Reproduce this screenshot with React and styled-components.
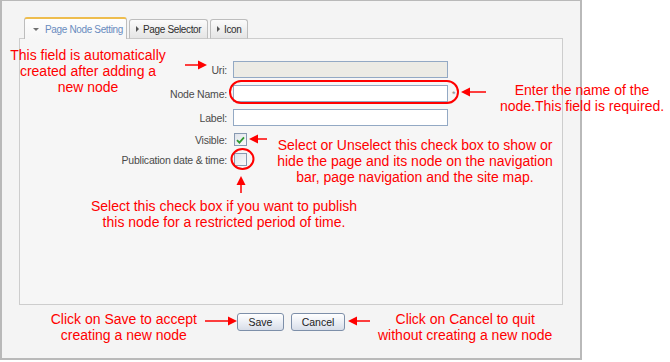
import React from "react";
import styled, { createGlobalStyle } from "styled-components";

const GlobalStyle = createGlobalStyle`
  html, body {
    margin: 0;
    padding: 0;
    background: #ffffff;
  }
  body {
    font-family: "Liberation Sans", Arial, sans-serif;
  }
`;

const Shell = styled.div`
  position: relative;
  width: 670px;
  height: 362px;
  overflow: hidden;
`;

const Panel = styled.div`
  box-sizing: border-box;
  width: 582px;
  height: 360px;
  padding: 16px 17px 0 17px;
  background: #f4f4f4;
  border: 2px solid #b9b9b9;
  border-top-width: 1px;
  display: flex;
  flex-direction: column;
`;

const TabBar = styled.ul`
  list-style: none;
  margin: 0 0 -1px 5px;
  padding: 0;
  display: flex;
  align-items: flex-end;
  gap: 2px;
  position: relative;
  z-index: 1;
`;

const Tab = styled.li`
  box-sizing: border-box;
  width: ${({ $width }) => $width}px;
  height: ${({ $active }) => ($active ? 22 : 20)}px;
  display: flex;
  align-items: center;
  gap: 4px;
  padding: ${({ $active }) => ($active ? "1px 0 0 8px" : "0 0 0 6px")};
  font-size: 10px;
  letter-spacing: -0.35px;
  color: ${({ $active }) => ($active ? "#6a8cbf" : "#2e2e2e")};
  border: 1px solid #bdbdbd;
  border-bottom: ${({ $active }) => ($active ? "none" : "1px solid #c9c9c9")};
  border-top: ${({ $active }) => ($active ? "2px solid #eebd4e" : "1px solid #bdbdbd")};
  border-radius: 3px 3px 0 0;
  background: ${({ $active }) =>
    $active ? "linear-gradient(#fdfdfd, #f6f6f6)" : "linear-gradient(#fbfbfb, #e5e5e5)"};
`;

const Caret = styled.span`
  width: 0;
  height: 0;
  ${({ $open }) =>
    $open
      ? `border-left: 3px solid transparent;
         border-right: 3px solid transparent;
         border-top: 3px solid #707070;
         margin-right: 2px;`
      : `border-top: 3px solid transparent;
         border-bottom: 3px solid transparent;
         border-left: 3px solid #555;`}
`;

const ContentBox = styled.div`
  box-sizing: border-box;
  height: 267px;
  background: #f6f6f6;
  border: 1px solid #cdcdcd;
  padding-top: 22px;
`;

const Form = styled.div`
  display: grid;
  grid-template-columns: 207px 215px auto;
  column-gap: 6px;
  row-gap: 7px;
  align-items: center;
`;

const Label = styled.label`
  text-align: right;
  font-size: 10.5px;
  letter-spacing: -0.2px;
  color: #4a4a4a;
  white-space: nowrap;
`;

const TextInput = styled.div`
  box-sizing: border-box;
  height: 17px;
  border: 1px solid #93a9c4;
  background: ${({ $disabled }) => ($disabled ? "#ecebe5" : "#ffffff")};
`;

const Required = styled.span`
  font-size: 9px;
  color: #888;
  margin-left: -2px;
`;

const CheckBox = styled.span`
  box-sizing: border-box;
  width: 13px;
  height: 13px;
  margin-left: 1px;
  border: 1px solid #8799b1;
  background: linear-gradient(135deg, #dfe3ea, #fbfbfb);
  display: flex;
  align-items: center;
  justify-content: center;
`;

const ButtonRow = styled.div`
  display: grid;
  grid-template-columns: 1fr auto 1fr;
  align-items: start;
  margin-top: 6px;
`;

const Side = styled.div`
  display: flex;
  align-items: flex-start;
  justify-content: ${({ $end }) => ($end ? "flex-end" : "flex-start")};
  gap: ${({ $gap }) => $gap}px;
`;

const Buttons = styled.div`
  display: flex;
  gap: 7px;
  padding-top: 2px;
`;

const Button = styled.button`
  box-sizing: border-box;
  width: ${({ $width }) => $width}px;
  height: 18px;
  padding: 0;
  font-family: "Liberation Sans", Arial, sans-serif;
  font-size: 10.5px;
  color: #222;
  border: 1px solid #7d8fa9;
  border-radius: 3px;
  background: linear-gradient(#ffffff, #e8ecf3 60%, #d7dde8);
`;

const Note = styled.div`
  font-size: 14px;
  line-height: 16px;
  color: #ff0000;
  text-align: center;
  white-space: nowrap;
`;

const Callout = styled(Note)`
  position: absolute;
  left: ${({ $x }) => $x}px;
  top: ${({ $y }) => $y}px;
  transform: translateX(-50%);
`;

const Overlay = styled.svg`
  position: absolute;
  left: 0;
  top: 0;
  pointer-events: none;
`;

const ArrowSvg = styled.svg`
  flex: none;
  margin-top: 2px;
`;

function FlowArrow({ length, left }) {
  return (
    <ArrowSvg width={length} height="18" viewBox={`0 0 ${length} 18`}>
      {left ? (
        <>
          <line x1="6" y1="8" x2={length} y2="8" stroke="#ff0000" strokeWidth="1.5" />
          <polygon points={`0,8 9,3.5 9,12.5`} fill="#ff0000" />
        </>
      ) : (
        <>
          <line x1="0" y1="8" x2={length - 6} y2="8" stroke="#ff0000" strokeWidth="1.5" />
          <polygon points={`${length},8 ${length - 9},3.5 ${length - 9},12.5`} fill="#ff0000" />
        </>
      )}
    </ArrowSvg>
  );
}

function Check() {
  return (
    <svg width="9" height="8" viewBox="0 0 9 8">
      <path d="M1 4.2 L3.4 6.6 L8 1.4" fill="none" stroke="#2f9a2f" strokeWidth="1.8" />
    </svg>
  );
}

const tabs = [
  { label: "Page Node Setting", width: 103, active: true },
  { label: "Page Selector", width: 79 },
  { label: "Icon", width: 38 },
];

export default function App() {
  return (
    <Shell>
      <GlobalStyle />
      <Panel>
        <TabBar>
          {tabs.map((t) => (
            <Tab key={t.label} $width={t.width} $active={t.active}>
              <Caret $open={t.active} />
              {t.label}
            </Tab>
          ))}
        </TabBar>
        <ContentBox>
          <Form>
            <Label>Uri:</Label>
            <TextInput $disabled />
            <span />
            <Label>Node Name:</Label>
            <TextInput />
            <Required>*</Required>
            <Label>Label:</Label>
            <TextInput />
            <span />
            <Label>Visible:</Label>
            <CheckBox>
              <Check />
            </CheckBox>
            <span />
            <Label>Publication date &amp; time:</Label>
            <CheckBox />
            <span />
          </Form>
        </ContentBox>
        <ButtonRow>
          <Side $end $gap={8}>
            <Note>
              Click on Save to accept
              <br />
              creating a new node
            </Note>
            <FlowArrow length={32} />
          </Side>
          <Buttons>
            <Button $width={47}>Save</Button>
            <Button $width={54}>Cancel</Button>
          </Buttons>
          <Side $gap={8}>
            <span style={{ marginLeft: 3, display: "flex" }}>
              <FlowArrow length={22} left />
            </span>
            <Note>
              Click on Cancel to quit
              <br />
              without creating a new node
            </Note>
          </Side>
        </ButtonRow>
      </Panel>

      <Callout $x={88} $y={47}>
        This field is automatically
        <br />
        created after adding a
        <br />
        new node
      </Callout>
      <Callout $x={582} $y={82}>
        Enter the name of the
        <br />
        node.This field is required.
      </Callout>
      <Callout $x={415} $y={137}>
        Select or Unselect this check box to show or
        <br />
        hide the page and its node on the navigation
        <br />
        bar, page navigation and the site map.
      </Callout>
      <Callout $x={224} $y={198}>
        Select this check box if you want to publish
        <br />
        this node for a restricted period of time.
      </Callout>

      <Overlay width="670" height="362" viewBox="0 0 670 362">
        <g stroke="#ff0000" strokeWidth="1.5" fill="none">
          <line x1="185" y1="65" x2="200" y2="65" />
          <line x1="468" y1="92" x2="486" y2="92" />
          <line x1="256" y1="139" x2="267" y2="139" />
          <line x1="241" y1="183" x2="241" y2="193" />
        </g>
        <g fill="#ff0000">
          <polygon points="207,65 198,60.5 198,69.5" />
          <polygon points="461,92 470,87.5 470,96.5" />
          <polygon points="249,139 258,134.5 258,143.5" />
          <polygon points="241,176 236.5,185 245.5,185" />
        </g>
        <g stroke="#ff0000" strokeWidth="2" fill="none">
          <rect x="230" y="81" width="228" height="22" rx="11" />
          <ellipse cx="242.5" cy="159" rx="11" ry="10" />
        </g>
      </Overlay>
    </Shell>
  );
}
